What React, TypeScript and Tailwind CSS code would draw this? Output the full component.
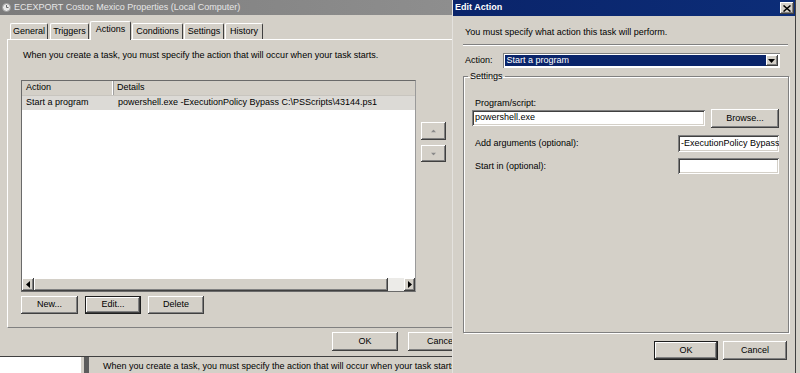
import type { ReactNode } from 'react';

const raised =
  'bg-[#d4d0c8] shadow-[inset_-1px_-1px_0_#404040,inset_1px_1px_0_#ffffff,inset_-2px_-2px_0_#808080]';
const sunken =
  'bg-white shadow-[inset_1px_1px_0_#808080,inset_-1px_-1px_0_#ffffff,inset_2px_2px_0_#404040,inset_-2px_-2px_0_#d4d0c8]';

function Button({ label, className, def }: { label: string; className: string; def?: boolean }) {
  return (
    <div
      className={`${className} ${def ? 'border border-[#1e1e1e]' : ''} flex items-center justify-center ${raised}`}
    >
      {label}
    </div>
  );
}

function Tab({ label, className, active }: { label: string; className: string; active?: boolean }) {
  return (
    <div
      className={`${className} ${
        active
          ? 'relative z-10 h-[19px] -mb-px pb-[2px] border-t border-l border-white border-r border-r-[#404040]'
          : 'h-[16px] border-t border-l border-white border-r border-r-[#404040]'
      } flex items-center justify-center rounded-t-[2px] bg-[#d4d0c8]`}
    >
      {label}
    </div>
  );
}

function Arrow({ dir, className }: { dir: 'up' | 'down' | 'left' | 'right'; className?: string }) {
  const pts =
    dir === 'up' ? '0,4 3.5,0 7,4' : dir === 'down' ? '0,0 3.5,4 7,0' : dir === 'left' ? '4,0 0,3.5 4,7' : '0,0 4,3.5 0,7';
  const w = dir === 'up' || dir === 'down' ? 7 : 4;
  const h = dir === 'up' || dir === 'down' ? 4 : 7;
  return (
    <svg width={w} height={h} viewBox={`0 0 ${w} ${h}`} className={className}>
      <polygon points={pts} fill="currentColor" />
    </svg>
  );
}

function Label({ children }: { children: ReactNode }) {
  return <div className="leading-[11px] whitespace-nowrap">{children}</div>;
}

function PropertiesDialog() {
  return (
    <div className="h-[357px] flex flex-col border-b border-[#404040]">
      <div className="h-[15px] flex items-center gap-[3px] pl-[2px] bg-gradient-to-r from-[#7c7c7c] to-[#8e8e8e] text-[#e6e6e6]">
        <svg width="9" height="9" viewBox="0 0 9 9">
          <circle cx="4.5" cy="4.5" r="4" fill="#e8e8e8" stroke="#9a9a9a" />
          <path d="M4.5 2v2.5H6.5" stroke="#6a6a6a" strokeWidth="1" fill="none" />
        </svg>
        <span className="whitespace-nowrap">ECEXPORT Costoc Mexico Properties (Local Computer)</span>
      </div>

      <div className="mt-[6px] ml-[10px] h-[18px] flex items-end">
        <Tab label="General" className="w-[38px] mr-[2px]" />
        <Tab label="Triggers" className="w-[39px] mr-px" />
        <Tab label="Actions" active className="w-[41px] mr-px" />
        <Tab label="Conditions" className="w-[51px] mr-px" />
        <Tab label="Settings" className="w-[40px] mr-px" />
        <Tab label="History" className="w-[38px]" />
      </div>

      <div className="ml-[7px] h-[289px] border-t border-l border-white border-b border-b-[#808080] pl-[13px] pt-[10px] flex flex-col">
        <div className="ml-[2px] leading-[11px] whitespace-nowrap">
          When you create a task, you must specify the action that will occur when your task starts.
        </div>

        <div className="mt-[19px] flex">
          <div className="w-[395px] h-[212px] border border-[#6a6a6a] border-r-[#9a9a9a] bg-white flex flex-col">
            <div className="h-[15px] flex bg-[#d4d0c8] border-b border-[#c8c5bf]">
              <div className="w-[91px] pl-[4px] flex items-center border-r border-[#ffffff] shadow-[1px_0_0_#a0a0a0]">
                Action
              </div>
              <div className="flex-1 pl-[4px] flex items-center">Details</div>
            </div>
            <div className="h-[14px] flex items-center bg-[#dcdad6]">
              <div className="w-[91px] pl-[4px] whitespace-nowrap">Start a program</div>
              <div className="pl-[5px] whitespace-nowrap">powershell.exe -ExecutionPolicy Bypass C:\PSScripts\43144.ps1</div>
            </div>
            <div className="flex-1" />
            <div className="h-[13px] flex">
              <div className={`w-[12px] flex items-center justify-center ${raised}`}>
                <Arrow dir="left" className="text-black" />
              </div>
              <div className={`w-[354px] ${raised}`} />
              <div className="flex-1 bg-[#ecebe8]" />
              <div className={`w-[11px] flex items-center justify-center ${raised}`}>
                <Arrow dir="right" className="text-black" />
              </div>
            </div>
          </div>

          <div className="ml-[5px] mt-[42px] flex flex-col gap-[5px]">
            <div className={`w-[25px] h-[18px] flex items-center justify-center ${raised}`}>
              <Arrow dir="up" className="text-[#8a8a8a] scale-75" />
            </div>
            <div className={`w-[25px] h-[17px] flex items-center justify-center ${raised}`}>
              <Arrow dir="down" className="text-[#8a8a8a] scale-75" />
            </div>
          </div>
        </div>

        <div className="mt-[4px] flex gap-[7px]">
          <Button label="New..." className="w-[57px] h-[18px]" />
          <Button label="Edit..." def className="w-[56px] h-[18px]" />
          <Button label="Delete" className="w-[56px] h-[18px]" />
        </div>
      </div>

      <div className="mt-[4px] ml-[332px] flex gap-[10px]">
        <Button label="OK" className="w-[66px] h-[19px] shrink-0" />
        <Button label="Cancel" className="w-[66px] h-[19px] shrink-0" />
      </div>
    </div>
  );
}

function EditActionDialog() {
  return (
    <div className="w-[344px] shrink-0 h-full flex flex-col border-l border-l-[#e4e2de] border-r border-r-[#404040]">
      <div className="h-[16px] flex items-center justify-between pl-[2px] pr-[1px] bg-gradient-to-r from-[#0a246a] to-[#0c2d78] text-white font-bold">
        <span>Edit Action</span>
        <div className={`w-[14px] h-[12px] flex items-center justify-center ${raised}`}>
          <svg width="8" height="7" viewBox="0 0 8 7">
            <path d="M0.5 0.5 L7.5 6.5 M7.5 0.5 L0.5 6.5" stroke="#000" strokeWidth="1.5" />
          </svg>
        </div>
      </div>

      <div className="pl-[12px] flex flex-col">
        <div className="mt-[11px] leading-[11px] whitespace-nowrap">
          You must specify what action this task will perform.
        </div>
        <div className="mt-[6px] -ml-[2px] w-[325px] h-[2px] border-t border-[#808080] border-b border-b-white" />

        <div className="mt-[7px] flex items-center">
          <Label>Action:</Label>
          <div className="ml-[10px] w-[277px] h-[15px] flex bg-white shadow-[inset_1px_1px_0_#808080,inset_-1px_-1px_0_#ffffff] p-[2px]">
            <div className="flex-1 bg-[#0a246a] text-white pl-[2px] flex items-center">Start a program</div>
            <div className={`w-[12px] flex items-center justify-center ${raised}`}>
              <Arrow dir="down" className="text-black" />
            </div>
          </div>
        </div>

        <fieldset className="mt-[3px] -ml-[2px] w-[326px] h-[262px] border border-[#808080] shadow-[inset_1px_1px_0_#ffffff,1px_1px_0_#ffffff] pl-[11px] pr-[9px] pt-[16px]">
          <legend className="-ml-[7px] px-[2px] leading-[11px]">Settings</legend>
          <Label>Program/script:</Label>
          <div className="-ml-[3px] flex items-start">
            <div className={`mt-px w-[233px] h-[16px] pl-[3px] flex items-center ${sunken}`}>powershell.exe</div>
            <Button label="Browse..." className="ml-[6px] w-[68px] h-[19px]" />
          </div>
          <div className="mt-[7px] h-[17px] flex items-center justify-between">
            <Label>Add arguments (optional):</Label>
            <div className={`w-[101px] h-[17px] pl-[3px] flex items-center whitespace-nowrap overflow-hidden ${sunken}`}>
              -ExecutionPolicy Bypass
            </div>
          </div>
          <div className="mt-[6px] h-[16px] flex items-center justify-between">
            <Label>Start in (optional):</Label>
            <div className={`w-[101px] h-[16px] ${sunken}`} />
          </div>
        </fieldset>

        <div className="mt-[8px] ml-[189px] flex gap-[5px]">
          <Button label="OK" def className="w-[64px] h-[19px]" />
          <Button label="Cancel" className="w-[64px] h-[19px]" />
        </div>
      </div>
    </div>
  );
}

export default function App() {
  return (
    <div className="w-[800px] h-[373px] overflow-hidden flex bg-[#d4d0c8] text-black text-[9px] font-['Liberation_Sans',Arial,sans-serif]">
      <div className="w-[452px] shrink-0 flex flex-col overflow-hidden">
        <PropertiesDialog />
        <div className="flex-1 flex">
          <div className="w-[81px] shrink-0 bg-white" />
          <div className="w-[3px] shrink-0" />
          <div className="w-[5px] shrink-0 bg-[#5c5c5c]" />
          <div className="pl-[14px] pt-[3px] whitespace-nowrap shrink-0">
            When you create a task, you must specify the action that will occur when your task starts.
          </div>
        </div>
      </div>
      <EditActionDialog />
    </div>
  );
}
